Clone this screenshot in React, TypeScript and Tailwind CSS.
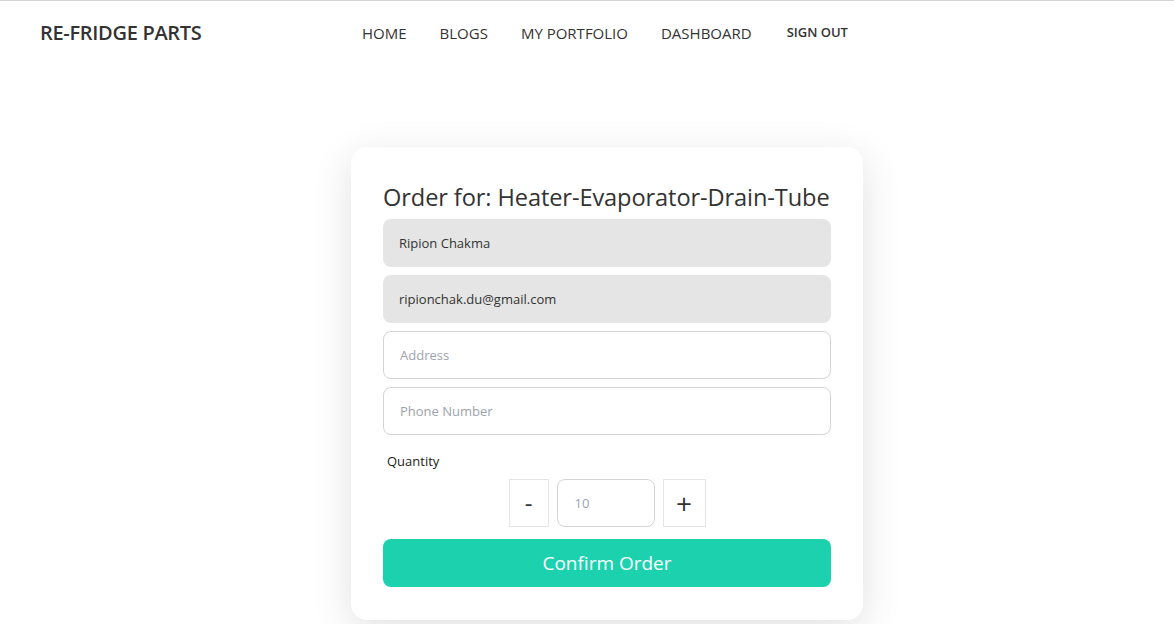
import React, { useState } from 'react';

const NAV_LINKS = ['HOME', 'BLOGS', 'MY PORTFOLIO', 'DASHBOARD'];

const App: React.FC = () => {
    const [qty, setQty] = useState('');

    return (
        <div className="min-h-screen bg-white border-t border-[#d4d4d4] text-[#333]" style={{ fontFamily: '"Open Sans", "Noto Sans", sans-serif' }}>
            {/* Navbar */}
            <nav className="h-[64px] flex items-center pl-10">
                <a className="text-[20px] font-semibold text-[#333] w-[322px] tracking-[-0.3px]">RE-FRIDGE PARTS</a>
                <ul className="flex items-center gap-[33px] text-[15px] text-[#333]">
                    {NAV_LINKS.map(link => <li key={link}>{link}</li>)}
                    <li className="text-[13px] font-semibold pl-[2px]">SIGN OUT</li>
                </ul>
            </nav>

            {/* Order card */}
            <div className="flex justify-center pt-[82px] pl-[40px]">
                <div className="w-[512px] bg-white rounded-2xl shadow-[0_10px_40px_rgba(0,0,0,0.12)] px-8 pt-[34px] pb-[33px]">
                    <h2 className="text-[23.6px] leading-[32px] text-[#333] mb-[6px] tracking-[-0.1px]">Order for: Heater-Evaporator-Drain-Tube</h2>
                    <form className="flex flex-col gap-2" onSubmit={e => e.preventDefault()}>
                        <input readOnly value="Ripion Chakma" className="h-12 rounded-lg bg-[#e5e5e5] px-4 text-[13px] text-[#333] outline-none" />
                        <input readOnly value="ripionchak.du@gmail.com" className="h-12 rounded-lg bg-[#e5e5e5] px-4 text-[13px] text-[#333] outline-none" />
                        <input placeholder="Address" className="h-12 rounded-lg border border-[#d4d4d4] px-4 text-[13px] placeholder:text-[#9ca3af] outline-none" />
                        <input placeholder="Phone Number" className="h-12 rounded-lg border border-[#d4d4d4] px-4 text-[13px] placeholder:text-[#9ca3af] outline-none" />
                        <label className="text-[13px] text-[#222] pl-1 mt-[8px] leading-[20px]">Quantity</label>
                        <div className="flex justify-center gap-2">
                            <button type="button" className="w-10 h-12 border border-[#e5e5e5] text-[24px] leading-none text-[#333]">-</button>
                            <input value={qty} onChange={e => setQty(e.target.value)} placeholder="10" className="w-[98px] h-12 rounded-lg border border-[#d4d4d4] px-[17px] text-[13px] placeholder:text-[#9ca3af] outline-none" />
                            <button type="button" className="w-[43px] h-12 border border-[#e5e5e5] text-[28px] leading-none text-[#333]">+</button>
                        </div>
                        <button type="submit" className="h-12 rounded-lg bg-[#1bd1ae] text-white text-[19px] mt-[4px]">Confirm Order</button>
                    </form>
                </div>
            </div>
        </div>
    );
};

export default App;
